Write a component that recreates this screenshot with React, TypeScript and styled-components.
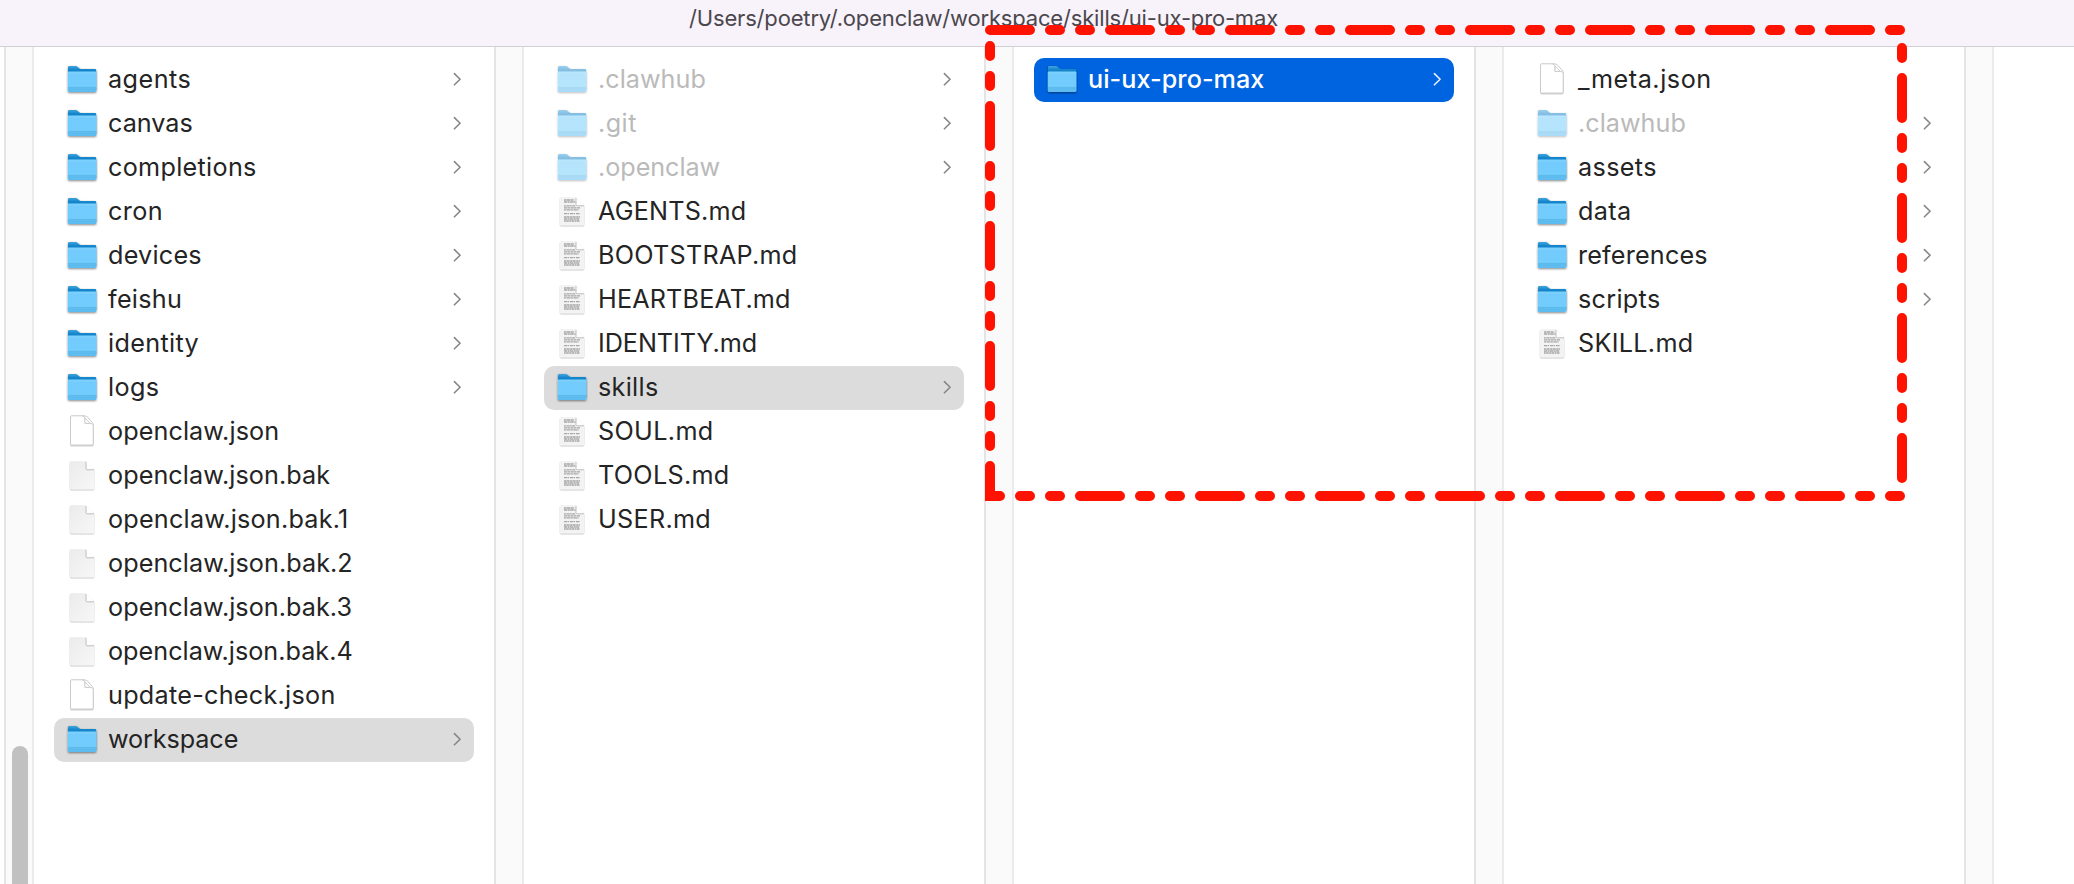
import React from 'react';
import styled, { createGlobalStyle } from 'styled-components';

type Kind = 'folder' | 'json' | 'blank' | 'text';
type Tone = 'normal' | 'hidden' | 'path' | 'active';

interface Entry {
  name: string;
  kind: Kind;
  tone?: Tone;
  tracking: number;
}

const GlobalStyle = createGlobalStyle`
  * { box-sizing: border-box; }
  body {
    margin: 0;
    background: #fff;
    font-family: Inter, 'Liberation Sans', sans-serif;
  }
`;

const Window = styled.div`
  position: relative;
  display: flex;
  flex-direction: column;
  width: 2074px;
  height: 884px;
  overflow: hidden;
  background: #fff;
`;

const PathBar = styled.header`
  display: flex;
  flex: none;
  justify-content: center;
  height: 47px;
  padding-right: 107px;
  border-bottom: 1px solid #d3d0d5;
  background: #f8f3fa;
  color: #4b474d;
  font-size: 22px;
  line-height: 36px;
  letter-spacing: -0.17px;
  white-space: nowrap;
`;

const Browser = styled.main`
  display: flex;
  flex: 1;
  min-height: 0;
  padding-left: 4px;
`;

const Gutter = styled.div`
  flex: none;
  display: flex;
  align-items: flex-end;
  width: 30px;
  padding-left: 6px;
  border-left: 2px solid #e4e4e4;
  border-right: 2px solid #ebebeb;
  background: #fafafa;
`;

const ScrollThumb = styled.div`
  width: 16px;
  height: 138px;
  border-radius: 8px 8px 0 0;
  background: #c1c1c1;
`;

const Column = styled.ul`
  flex: none;
  width: 460px;
  margin: 0;
  padding: 11px 20px 0;
  list-style: none;
`;

const rowBackground: Record<Tone, string> = {
  normal: 'transparent',
  hidden: 'transparent',
  path: '#dcdcdc',
  active: '#0064e1',
};

const Row = styled.li<{ $tone: Tone }>`
  display: flex;
  align-items: flex-start;
  height: 44px;
  padding: 0 12px;
  border-radius: 10px;
  background: ${(p) => rowBackground[p.$tone]};
`;

const IconBox = styled.svg<{ $dim?: boolean }>`
  flex: none;
  width: 32px;
  height: 44px;
  margin-right: 10px;
  opacity: ${(p) => (p.$dim ? 0.52 : 1)};
`;

const Name = styled.span<{ $tone: Tone; $tracking: number }>`
  flex: 1;
  color: ${(p) => (p.$tone === 'active' ? '#fff' : p.$tone === 'hidden' ? '#bababa' : '#242424')};
  font-size: 25.2px;
  font-weight: ${(p) => (p.$tone === 'active' ? 500 : 400)};
  line-height: 42px;
  letter-spacing: ${(p) => p.$tracking}px;
  white-space: nowrap;
`;

const Arrow = styled.svg<{ $tone: Tone }>`
  flex: none;
  width: 10px;
  height: 44px;
  color: ${(p) => (p.$tone === 'active' ? '#e6effc' : '#868686')};
`;

const Highlight = styled.svg`
  position: absolute;
  top: 0;
  left: 0;
  width: 2074px;
  height: 884px;
  pointer-events: none;
`;

const HiddenDefs = styled.svg`
  position: absolute;
  width: 0;
  height: 0;
`;

function Defs() {
  return (
    <HiddenDefs aria-hidden>
      <defs>
        <linearGradient id="folderBack" x1="0" y1="0" x2="0" y2="1">
          <stop offset="0" stopColor="#3ea4dc" />
          <stop offset="0.16" stopColor="#1484cb" />
          <stop offset="1" stopColor="#0f7cc6" />
        </linearGradient>
        <linearGradient id="folderFront" x1="0" y1="0" x2="0" y2="1">
          <stop offset="0" stopColor="#80d2fc" />
          <stop offset="0.15" stopColor="#72cbfc" />
          <stop offset="0.7" stopColor="#72ccfc" />
          <stop offset="1" stopColor="#5ab9ee" />
        </linearGradient>
        <linearGradient id="page" x1="0" y1="0" x2="1" y2="1">
          <stop offset="0" stopColor="#ebebeb" />
          <stop offset="1" stopColor="#f7f7f7" />
        </linearGradient>
        <filter id="shade" x="-20%" y="-20%" width="140%" height="150%">
          <feDropShadow dx="0" dy="0.9" stdDeviation="0.9" floodColor="#000" floodOpacity="0.5" />
        </filter>
        <filter id="pageShade" x="-20%" y="-20%" width="140%" height="150%">
          <feDropShadow dx="0" dy="0.5" stdDeviation="0.7" floodColor="#000" floodOpacity="0.42" />
        </filter>
      </defs>
    </HiddenDefs>
  );
}

function FolderIcon({ dim }: { dim: boolean }) {
  return (
    <IconBox viewBox="0 0 32 44" $dim={dim}>
      <g filter="url(#shade)">
        <path
          d="M2 9.4Q2 8.1 3.3 8.1H9.9Q10.8 8.1 11.5 8.7L13.2 10.3Q14 11 15 11H29Q30.2 11 30.2 12.2V32H2Z"
          fill="url(#folderBack)"
        />
        <path
          d="M1.8 14.6Q1.8 13.6 2.8 13.6H29.4Q30.4 13.6 30.4 14.6V32.6Q30.4 34.1 28.9 34.1H3.3Q1.8 34.1 1.8 32.6Z"
          fill="url(#folderFront)"
        />
      </g>
      <path d="M2 29.6H30.2M2 31H30.2" stroke="#4ba9dd" strokeWidth="0.5" />
    </IconBox>
  );
}

function JsonIcon() {
  return (
    <IconBox viewBox="0 0 32 44">
      <g filter="url(#pageShade)">
        <path
          d="M5.8 5.8H18.2Q20.4 6 21.6 7.2L26.2 12.3Q27.2 13.6 27.2 15.4V34.2Q27.2 35 26.4 35H5.3Q4.5 35 4.5 34.2V6.8Q4.5 5.8 5.8 5.8Z"
          fill="#fff"
          stroke="#c4c4c4"
          strokeWidth="0.8"
        />
      </g>
      <path
        d="M16.6 6.2Q19 6.4 19 8.2V13.4H24.4Q26.4 13.6 27 14.8"
        fill="none"
        stroke="#cbcbcb"
        strokeWidth="0.9"
      />
      <path d="M19 8L24.4 13.4H19Z" fill="#fff" stroke="#c4c4c4" strokeWidth="0.8" />
    </IconBox>
  );
}

const textLines: { y: number; end: number; dash: string }[] = [
  { y: 10, end: 18.2, dash: '2.6 0.4 3.4 0.5' },
  { y: 12, end: 19.4, dash: '3.4 0.5 1.8 0.5' },
  { y: 15.8, end: 19.2, dash: '1.8 0.5 3.2 0.4' },
  { y: 17.8, end: 24, dash: '3.2 0.4 2.4 0.5' },
  { y: 19.8, end: 22.6, dash: '2.2 0.5 3.6 0.4' },
  { y: 23.6, end: 24, dash: '3 0.5 1.6 0.9' },
  { y: 27, end: 24, dash: '2.2 0.4 3 0.5' },
  { y: 29, end: 23.2, dash: '3.2 0.5 2 0.4' },
  { y: 31, end: 24, dash: '1.8 0.4 2.6 0.5' },
];

function PageIcon({ lines }: { lines: boolean }) {
  return (
    <IconBox viewBox="0 0 32 44">
      <g filter="url(#pageShade)">
        <path
          d="M5.1 7.4H20L28.4 15.8V34Q28.4 35.4 27 35.4H5.1Q3.7 35.4 3.7 34V8.8Q3.7 7.4 5.1 7.4Z"
          fill={lines ? '#f3f3f3' : 'url(#page)'}
        />
      </g>
      {lines && (
        <g fill="none" stroke="#a6a6a6" strokeWidth="1.3">
          {textLines.map((line) => (
            <path key={line.y} d={`M8 ${line.y}H${line.end}`} strokeDasharray={line.dash} />
          ))}
        </g>
      )}
      <path d="M20 7.6L28.2 15.8H21.2Q20 15.8 20 14.6Z" fill="#fff" />
      <path d="M20 8V14.6Q20 15.8 21.2 15.8H28" fill="none" stroke="#bcbcbc" strokeWidth="1" />
    </IconBox>
  );
}

function FileIcon({ kind, dim }: { kind: Kind; dim: boolean }) {
  if (kind === 'folder') return <FolderIcon dim={dim} />;
  if (kind === 'json') return <JsonIcon />;
  return <PageIcon lines={kind === 'text'} />;
}

function FileRow({ name, kind, tone = 'normal', tracking }: Entry) {
  return (
    <Row $tone={tone}>
      <FileIcon kind={kind} dim={tone === 'hidden'} />
      <Name $tone={tone} $tracking={tracking}>
        {name}
      </Name>
      {kind === 'folder' && (
        <Arrow viewBox="0 0 10 44" $tone={tone}>
          <path
            d="M2.4 15.6L8.1 21.2L2.4 26.8"
            fill="none"
            stroke="currentColor"
            strokeWidth="1.6"
            strokeLinecap="round"
            strokeLinejoin="round"
          />
        </Arrow>
      )}
    </Row>
  );
}

const columns: Entry[][] = [
  [
    { name: 'agents', kind: 'folder', tracking: 0.48 },
    { name: 'canvas', kind: 'folder', tracking: 0 },
    { name: 'completions', kind: 'folder', tracking: 0.3 },
    { name: 'cron', kind: 'folder', tracking: 0.39 },
    { name: 'devices', kind: 'folder', tracking: 0.23 },
    { name: 'feishu', kind: 'folder', tracking: 0.3 },
    { name: 'identity', kind: 'folder', tracking: 0.35 },
    { name: 'logs', kind: 'folder', tracking: 0.4 },
    { name: 'openclaw.json', kind: 'json', tracking: 0.08 },
    { name: 'openclaw.json.bak', kind: 'blank', tracking: 0.06 },
    { name: 'openclaw.json.bak.1', kind: 'blank', tracking: 0.22 },
    { name: 'openclaw.json.bak.2', kind: 'blank', tracking: 0.06 },
    { name: 'openclaw.json.bak.3', kind: 'blank', tracking: 0.05 },
    { name: 'openclaw.json.bak.4', kind: 'blank', tracking: 0.01 },
    { name: 'update-check.json', kind: 'json', tracking: 0.27 },
    { name: 'workspace', kind: 'folder', tone: 'path', tracking: -0.1 },
  ],
  [
    { name: '.clawhub', kind: 'folder', tone: 'hidden', tracking: 0.02 },
    { name: '.git', kind: 'folder', tone: 'hidden', tracking: 0.45 },
    { name: '.openclaw', kind: 'folder', tone: 'hidden', tracking: -0.05 },
    { name: 'AGENTS.md', kind: 'text', tracking: 0.2 },
    { name: 'BOOTSTRAP.md', kind: 'text', tracking: 0.25 },
    { name: 'HEARTBEAT.md', kind: 'text', tracking: 0.16 },
    { name: 'IDENTITY.md', kind: 'text', tracking: -0.06 },
    { name: 'skills', kind: 'folder', tone: 'path', tracking: 0.3 },
    { name: 'SOUL.md', kind: 'text', tracking: 0.35 },
    { name: 'TOOLS.md', kind: 'text', tracking: 0.3 },
    { name: 'USER.md', kind: 'text', tracking: 0.3 },
  ],
  [{ name: 'ui-ux-pro-max', kind: 'folder', tone: 'active', tracking: 0.05 }],
  [
    { name: '_meta.json', kind: 'json', tracking: 0.55 },
    { name: '.clawhub', kind: 'folder', tone: 'hidden', tracking: 0.02 },
    { name: 'assets', kind: 'folder', tracking: 0.35 },
    { name: 'data', kind: 'folder', tracking: 0.35 },
    { name: 'references', kind: 'folder', tracking: 0.18 },
    { name: 'scripts', kind: 'folder', tracking: 0.3 },
    { name: 'SKILL.md', kind: 'text', tracking: 0.3 },
  ],
];

export default function App() {
  return (
    <>
      <GlobalStyle />
      <Defs />
      <Window>
        <PathBar>/Users/poetry/.openclaw/workspace/skills/ui-ux-pro-max</PathBar>
        <Browser>
          <Gutter>
            <ScrollThumb />
          </Gutter>
          {columns.map((entries, index) => (
            <React.Fragment key={index}>
              <Column>
                {entries.map((entry) => (
                  <FileRow key={entry.name} {...entry} />
                ))}
              </Column>
              <Gutter />
            </React.Fragment>
          ))}
        </Browser>
        <Highlight viewBox="0 0 2074 884">
          <rect
            x="990"
            y="30"
            width="912"
            height="466"
            fill="none"
            stroke="#ff1200"
            strokeWidth="10"
            strokeLinecap="round"
            strokeDasharray="40 20 10 20 10 20"
          />
        </Highlight>
      </Window>
    </>
  );
}
